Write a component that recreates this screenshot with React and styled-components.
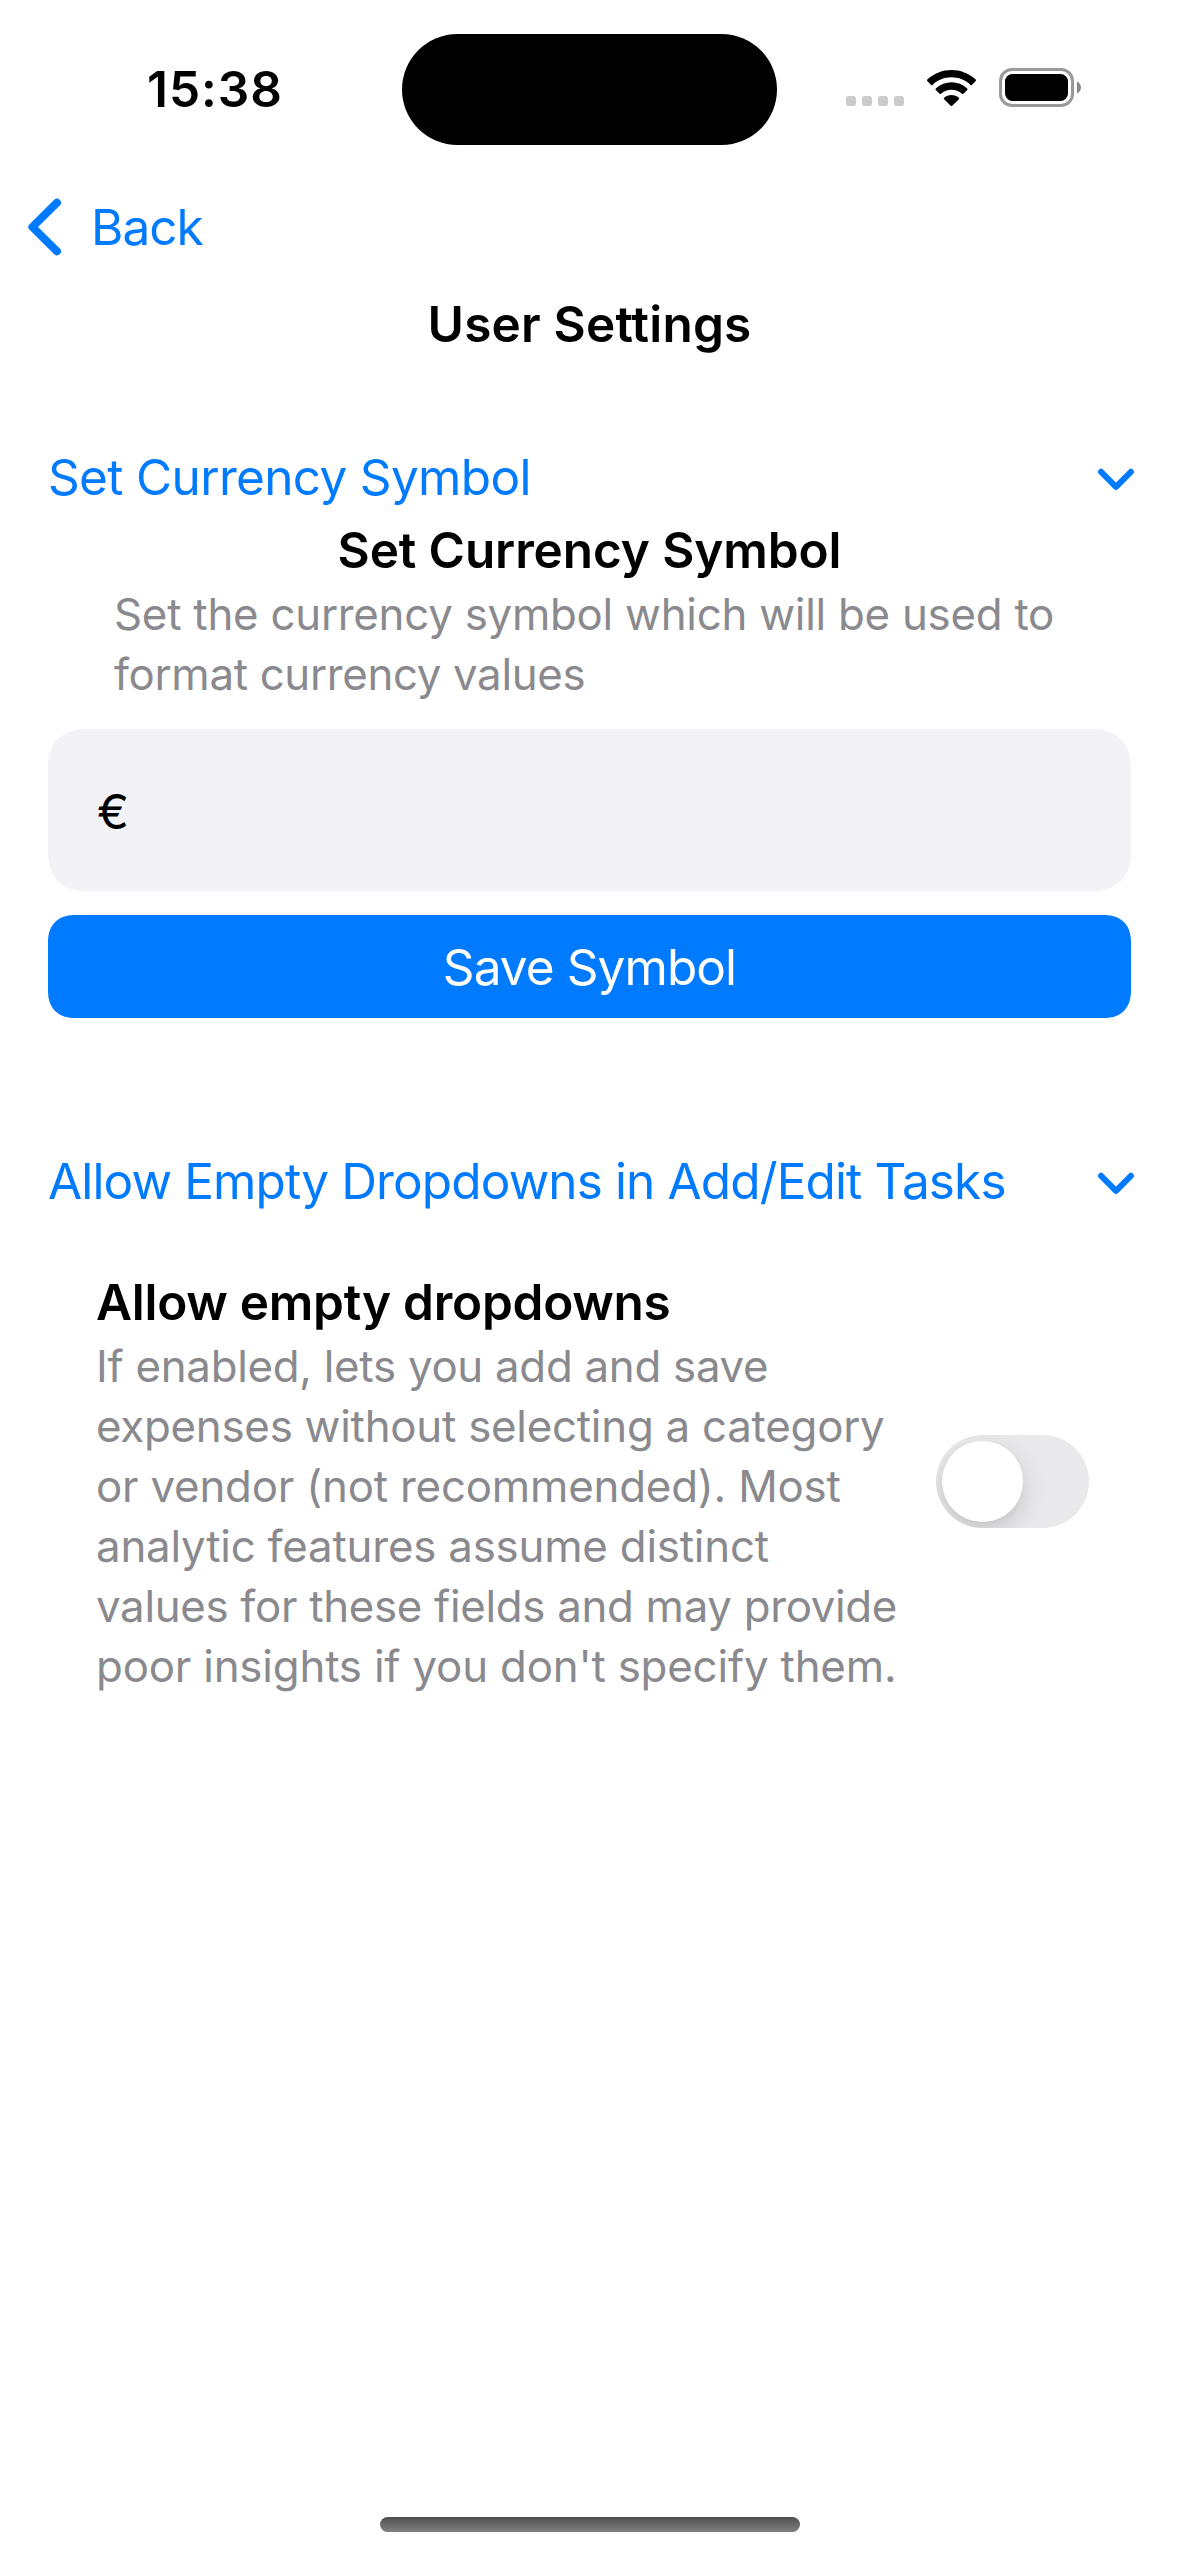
import React from "react";
import styled, { createGlobalStyle } from "styled-components";

const BLUE = "#007aff";

const GlobalStyle = createGlobalStyle`
  *, *::before, *::after { box-sizing: border-box; }
  body {
    margin: 0;
    background: #fff;
    font-family: Inter, "Liberation Sans", sans-serif;
    color: #000;
  }
`;

const Screen = styled.main`
  display: flex;
  flex-direction: column;
  width: 1179px;
  height: 2556px;
  background: #fff;
  overflow: hidden;
`;

const StatusBar = styled.header`
  display: grid;
  grid-template-columns: 402px 375px 402px;
  align-items: center;
  height: 177px;
`;

const Time = styled.div`
  padding-left: 147px;
  font-size: 49.5px;
  font-weight: 600;
  line-height: 60px;
  letter-spacing: 1px;
`;

const Island = styled.div`
  height: 111px;
  margin-top: 1px;
  border-radius: 56px;
  background: #000;
`;

const StatusIcons = styled.div`
  display: flex;
  align-items: center;
  height: 39px;
  margin-bottom: 2px;
  padding-left: 69px;
`;

const Dots = styled.div`
  display: flex;
  align-self: flex-end;
  gap: 6px;
  margin-bottom: 1px;
`;

const Dot = styled.span`
  width: 10px;
  height: 10px;
  border-radius: 3px;
  background: #cbcbcb;
`;

const WifiIcon = styled.svg`
  width: 51px;
  height: 38px;
  margin-left: 22px;
`;

const BatteryIcon = styled.svg`
  width: 83px;
  height: 39px;
  margin-left: 22px;
`;

const BackButton = styled.button`
  display: flex;
  align-items: center;
  align-self: flex-start;
  gap: 29px;
  height: 99px;
  padding: 0 24px 0 28px;
  border: 0;
  background: none;
  color: ${BLUE};
  font: 400 49.5px/60px Inter, "Liberation Sans", sans-serif;
  letter-spacing: -1px;
`;

const PageTitle = styled.h1`
  margin: 18px 0 0;
  font-size: 49.5px;
  font-weight: 600;
  line-height: 60px;
  letter-spacing: 0.2px;
  text-align: center;
`;

const Section = styled.section`
  display: flex;
  flex-direction: column;
  margin-top: ${({ $top }) => $top}px;
`;

const SectionHeader = styled.div`
  display: flex;
  align-items: center;
  justify-content: space-between;
  padding: 0 45px 0 48px;
  color: ${BLUE};
  font-size: 49.5px;
  line-height: 60px;
  letter-spacing: ${({ $tracking }) => $tracking}px;
`;

const Chevron = styled.svg`
  flex: none;
  width: ${({ $w }) => $w}px;
  height: ${({ $h }) => $h}px;
  margin-top: ${({ $nudge }) => $nudge || 0}px;
  fill: none;
  stroke: ${BLUE};
  stroke-linecap: round;
  stroke-linejoin: round;
`;

const Heading = styled.h2`
  margin: 0;
  font-size: 49.5px;
  font-weight: 600;
  line-height: 60px;
  letter-spacing: ${({ $tracking }) => $tracking}px;
`;

const CurrencyIntro = styled.div`
  display: flex;
  flex-direction: column;
  gap: 5px;
  margin-top: 13px;

  ${Heading} { text-align: center; }
`;

const Description = styled.p`
  margin: 0;
  padding-left: ${({ $indent }) => $indent}px;
  color: #8a8a8e;
  font-size: 43.8px;
  line-height: 60px;
  white-space: nowrap;
`;

const Line = styled.span`
  display: block;
  letter-spacing: ${({ $tracking }) => $tracking}px;
`;

const Field = styled.div`
  display: flex;
  align-items: center;
  height: 162px;
  margin: 24px 48px 0;
  padding: 3px 49px 0;
  border-radius: 40px;
  corner-shape: superellipse(1.25);
  background: #f2f2f7;
  font-size: 48px;
  line-height: 60px;
`;

const SaveButton = styled.button`
  height: 103px;
  margin: 24px 48px 0;
  padding: 0;
  border: 0;
  border-radius: 28px;
  corner-shape: superellipse(1.25);
  background: ${BLUE};
  color: #fff;
  font: 400 49.5px/60px Inter, "Liberation Sans", sans-serif;
  letter-spacing: -0.92px;
`;

const ToggleRow = styled.div`
  display: flex;
  align-items: center;
  justify-content: space-between;
  margin-top: 61px;
  padding: 0 90px 0 96px;
`;

const ToggleText = styled.div`
  display: flex;
  flex-direction: column;
  gap: 5px;
`;

const Switch = styled.div`
  flex: none;
  width: 153px;
  height: 93px;
  margin-bottom: 6px;
  padding: 6px;
  border-radius: 47px;
  background: #e9e9eb;
  overflow: hidden;
`;

const Knob = styled.div`
  width: 81px;
  height: 81px;
  border-radius: 50%;
  background: #fff;
  box-shadow: 0 9px 24px rgba(0, 0, 0, 0.15), 0 3px 6px rgba(0, 0, 0, 0.03);
`;

const HomeIndicator = styled.div`
  align-self: center;
  width: 420px;
  height: 15px;
  margin: auto 0 24px;
  border-radius: 8px;
  background: linear-gradient(#505050, #808080);
`;

function DisclosureChevron() {
  return (
    <Chevron $w={36} $h={23} $nudge={5} viewBox="0 0 36 23" strokeWidth="6">
      <path d="M3.1 3.8 L18 18.8 L32.9 3.8" />
    </Chevron>
  );
}

const currencyLines = [
  ["Set the currency symbol which will be used to", -0.24],
  ["format currency values", -0.33],
];

const dropdownLines = [
  ["If enabled, lets you add and save", -0.27],
  ["expenses without selecting a category", -0.24],
  ["or vendor (not recommended). Most", -0.19],
  ["analytic features assume distinct", -0.2],
  ["values for these fields and may provide", -0.3],
  ["poor insights if you don't specify them.", -0.18],
];

function Lines({ lines }) {
  return lines.map(([text, tracking]) => (
    <Line key={text} $tracking={tracking}>{text}</Line>
  ));
}

export default function App() {
  return (
    <>
      <GlobalStyle />
      <Screen>
        <StatusBar>
          <Time>15:38</Time>
          <Island />
          <StatusIcons>
            <Dots><Dot /><Dot /><Dot /><Dot /></Dots>
            <WifiIcon viewBox="0 0 51 38">
              <path d="M25.5 8.300c7.100 0 13.900 2.700 19 7.600.4.400 1 .4 1.400 0l3.800-3.800c.4-.4.4-1.100 0-1.500C36.200-2.200 14.800-2.200 1.300 10.600c-.4.400-.4 1.100 0 1.500l3.800 3.800c.4.400 1 .4 1.400 0 5.200-4.900 11.900-7.600 19-7.600z" />
              <path d="M25.500 20.700c3.900 0 7.600 1.400 10.500 4 .4.400 1 .4 1.400 0l3.800-3.800c.4-.4.4-1.100 0-1.500-8.800-8.200-22.500-8.200-31.400 0-.4.400-.4 1.100 0 1.500l3.800 3.800c.4.400 1 .4 1.400 0 2.900-2.600 6.600-4 10.500-4z" />
              <path d="M32.900 29c.4-.4.4-1.100 0-1.500-4.300-3.600-10.500-3.600-14.800 0-.4.4-.5 1.100 0 1.500l6.600 6.600c.4.400 1.100.4 1.500 0z" transform="translate(0 1.200)" />
            </WifiIcon>
            <BatteryIcon viewBox="0 0 83 39">
              <rect x="1.500" y="1.500" width="72" height="36" rx="11.500" fill="none" stroke="#999" strokeWidth="3" />
              <rect x="6" y="6" width="63" height="27" rx="7.500" />
              <path d="M78 13.500v12c2.400-1 4-3.400 4-6s-1.600-5-4-6z" fill="#888" />
            </BatteryIcon>
          </StatusIcons>
        </StatusBar>

        <BackButton>
          <Chevron $w={34} $h={58} viewBox="0 0 34 58" strokeWidth="8">
            <path d="M29 4.700 L4.400 29 L29 53.300" />
          </Chevron>
          Back
        </BackButton>
        <PageTitle>User Settings</PageTitle>

        <Section $top={93}>
          <SectionHeader $tracking={-0.67}>
            Set Currency Symbol
            <DisclosureChevron />
          </SectionHeader>
          <CurrencyIntro>
            <Heading $tracking={-0.1}>Set Currency Symbol</Heading>
            <Description $indent={114}><Lines lines={currencyLines} /></Description>
          </CurrencyIntro>
          <Field>€</Field>
          <SaveButton>Save Symbol</SaveButton>
        </Section>

        <Section $top={133}>
          <SectionHeader $tracking={-0.87}>
            Allow Empty Dropdowns in Add/Edit Tasks
            <DisclosureChevron />
          </SectionHeader>
          <ToggleRow>
            <ToggleText>
              <Heading $tracking={-0.26}>Allow empty dropdowns</Heading>
              <Description $indent={0}><Lines lines={dropdownLines} /></Description>
            </ToggleText>
            <Switch role="switch" aria-checked="false"><Knob /></Switch>
          </ToggleRow>
        </Section>

        <HomeIndicator />
      </Screen>
    </>
  );
}
